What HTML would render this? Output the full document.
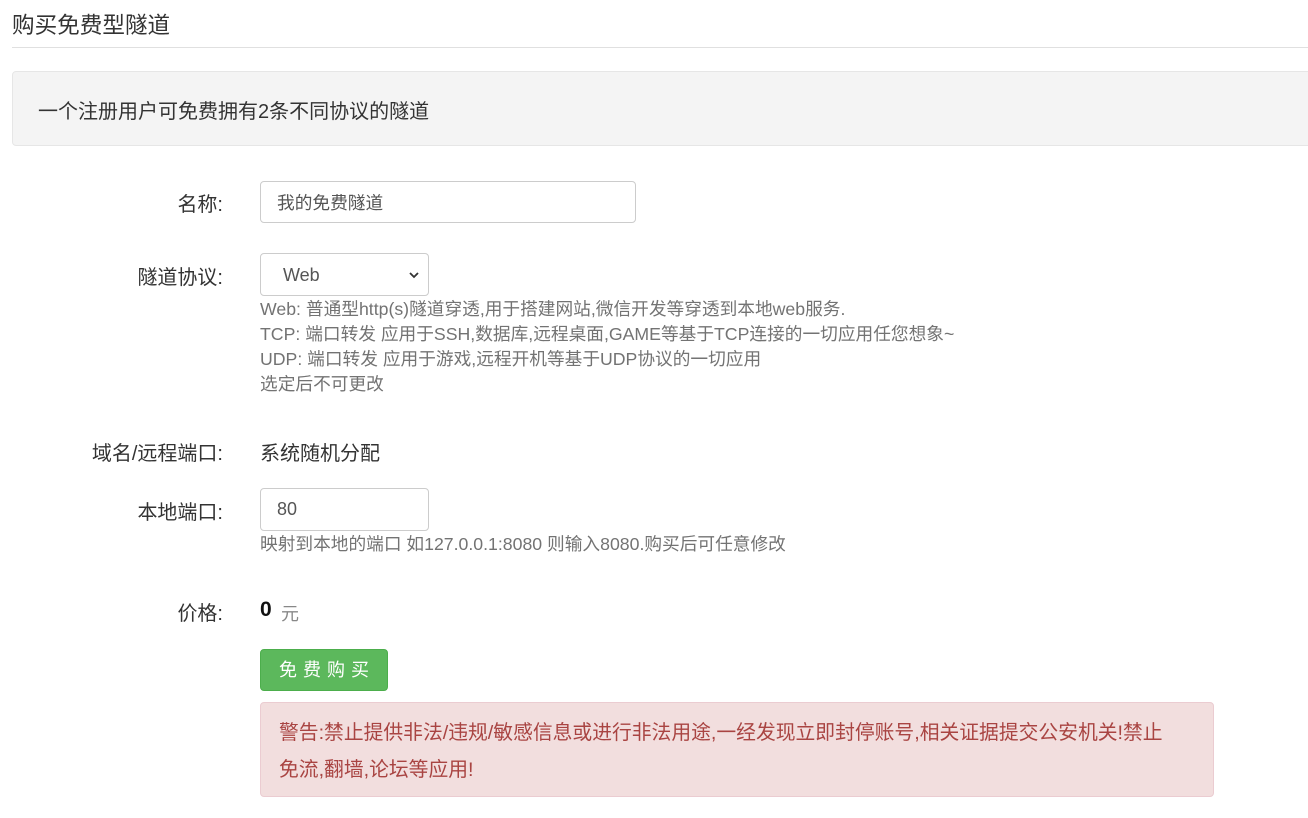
<!DOCTYPE html>
<html><head><meta charset="utf-8"><style>
body{margin:0;width:1308px;height:818px;background:#fff;font-family:"Liberation Sans","Noto Sans CJK SC",sans-serif;color:#333;position:relative;overflow:hidden}
.a{position:absolute;white-space:nowrap}
.lbl{position:absolute;right:1085px;font-size:20px;color:#333}
.help{color:#737373;font-size:17.7px;line-height:25px}
</style></head><body>
<div class="a" style="left:12px;top:7px;font-size:22.6px;color:#333">购买免费型隧道</div>
<div class="a" style="left:12px;top:47px;width:1296px;height:1px;background:#e0e0e0"></div>
<div class="a" style="left:12px;top:71px;width:1300px;height:73px;background:#f4f4f4;border:1px solid #e6e6e6;border-radius:4px"></div>
<div class="a" style="left:38px;top:95px;font-size:20px;color:#333">一个注册用户可免费拥有2条不同协议的隧道</div>

<div class="lbl" style="top:188px">名称:</div>
<div class="a" style="left:260px;top:181px;width:374px;height:40px;border:1px solid #ccc;border-radius:4px"></div>
<div class="a" style="left:277px;top:189px;font-size:17.7px;color:#555">我的免费隧道</div>

<div class="lbl" style="top:261px">隧道协议:</div>
<div class="a" style="left:260px;top:253px;width:167px;height:41px;border:1px solid #ccc;border-radius:4px"></div>
<div class="a" style="left:283px;top:265px;font-size:18px;color:#555">Web</div>
<svg class="a" style="left:408px;top:270px" width="12" height="10"><path d="M2 3l4 4 4-4" stroke="#333" stroke-width="1.8" fill="none"/></svg>
<div class="a help" style="left:260px;top:297px">Web: 普通型http(s)隧道穿透,用于搭建网站,微信开发等穿透到本地web服务.<br>TCP: 端口转发 应用于SSH,数据库,远程桌面,GAME等基于TCP连接的一切应用任您想象~<br>UDP: 端口转发 应用于游戏,远程开机等基于UDP协议的一切应用<br>选定后不可更改</div>

<div class="lbl" style="top:437px">域名/远程端口:</div>
<div class="a" style="left:260px;top:437px;font-size:20px;color:#333">系统随机分配</div>

<div class="lbl" style="top:496px">本地端口:</div>
<div class="a" style="left:260px;top:488px;width:167px;height:41px;border:1px solid #ccc;border-radius:4px"></div>
<div class="a" style="left:277px;top:499px;font-size:18px;color:#555">80</div>
<div class="a help" style="left:260px;top:532px">映射到本地的端口 如127.0.0.1:8080 则输入8080.购买后可任意修改</div>

<div class="lbl" style="top:597px">价格:</div>
<div class="a" style="left:260px;top:598px;font-size:21px;font-weight:bold;color:#111">0</div>
<div class="a" style="left:281px;top:600px;font-size:18px;color:#888">元</div>

<div class="a" style="left:260px;top:649px;width:126px;height:40px;background:#5cb85c;border:1px solid #4cae4c;border-radius:4px;color:#fff;font-size:18px;line-height:40px;text-align:center;letter-spacing:6px;text-indent:6px">免费购买</div>

<div class="a" style="left:260px;top:702px;width:952px;height:93px;background:#f2dede;border:1px solid #ebccd1;border-radius:4px"></div>
<div class="a" style="left:279px;top:715px;font-size:19.8px;line-height:37px;color:#a94442;white-space:normal;width:890px">警告:禁止提供非法/违规/敏感信息或进行非法用途,一经发现立即封停账号,相关证据提交公安机关!禁止免流,翻墙,论坛等应用!</div>
</body></html>
